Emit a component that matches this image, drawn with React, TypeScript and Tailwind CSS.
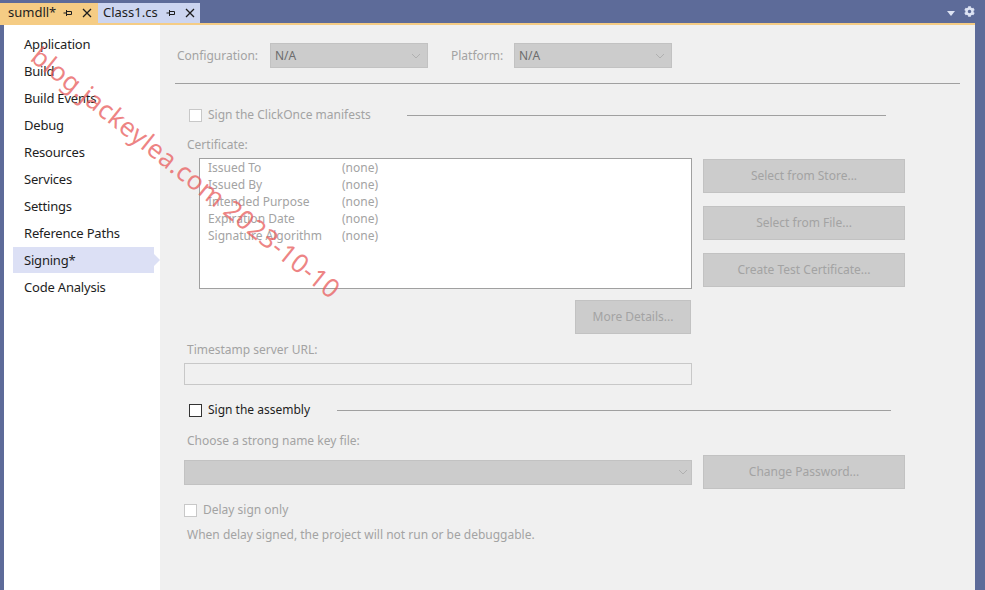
import React from "react";
import { FaCog } from "react-icons/fa";

const font = { fontFamily: '"Noto Sans", "Noto Sans CJK SC", sans-serif' };

const navItems = [
  "Application",
  "Build",
  "Build Events",
  "Debug",
  "Resources",
  "Services",
  "Settings",
  "Reference Paths",
  "Signing*",
  "Code Analysis",
];

const certRows = [
  "Issued To",
  "Issued By",
  "Intended Purpose",
  "Expiration Date",
  "Signature Algorithm",
];

function Pin() {
  return (
    <svg width="10" height="10" viewBox="0 0 10 10" className="shrink-0">
      <path d="M0.5 5H3.5M3.5 2V8M3.5 3.5H8.5V6.5H3.5" stroke="#1e1e1e" strokeWidth="1" fill="none" />
    </svg>
  );
}

function Close() {
  return (
    <svg width="10" height="10" viewBox="0 0 10 10" className="shrink-0">
      <path d="M1 1L9 9M9 1L1 9" stroke="#1e1e1e" strokeWidth="1.3" fill="none" />
    </svg>
  );
}

function Chevron() {
  return (
    <svg width="10" height="6" viewBox="0 0 10 6">
      <path d="M1 1L5 5L9 1" stroke="#b0b0b0" strokeWidth="1" fill="none" />
    </svg>
  );
}

function Check({ dark }: { dark?: boolean }) {
  return (
    <div
      className={
        dark
          ? "w-[13px] h-[13px] border border-[#333333] bg-white shrink-0"
          : "w-[13px] h-[13px] border border-[#c8c8c8] bg-white shrink-0"
      }
    />
  );
}

function Btn({ label, w }: { label: string; w: string }) {
  return (
    <div className={`${w} h-[34px] bg-[#cccccc] border border-[#c2c2c2] flex items-center justify-center text-[12px] text-[#a3a3a3]`}>
      {label}
    </div>
  );
}

export default function App() {
  return (
    <div className="w-[985px] h-[590px] bg-[#5d6b99] flex flex-col relative overflow-hidden" style={font}>
      {/* tab strip */}
      <div className="h-[23px] flex items-end shrink-0">
        <div className="w-[98px] h-[20px] bg-[#f5cc84] flex items-center pl-[8px] text-[13px] text-[#1e1e1e]">
          <span className="w-[55px]">sumdll*</span>
          <Pin />
          <span className="w-[9px]" />
          <Close />
        </div>
        <div className="w-[102px] h-[20px] bg-[#ccd5f0] flex items-center pl-[5px] text-[13px] text-[#1e1e1e]">
          <span className="w-[63px]">Class1.cs</span>
          <Pin />
          <span className="w-[9px]" />
          <Close />
        </div>
        <div className="flex-1" />
        <div className="h-[23px] flex items-center gap-[9px] pr-[10px]">
          <svg width="8" height="5" viewBox="0 0 8 5" className="mt-[3px]">
            <path d="M0 0H8L4 5Z" fill="#dde3f3" />
          </svg>
          <FaCog className="w-[11px] h-[11px] text-[#dde3f3]" />
        </div>
      </div>
      <div className="h-[2px] bg-[#f5cc84] mr-[10px] shrink-0" />

      <div className="flex-1 flex ml-[4px] mr-[10px]">
        {/* nav */}
        <div className="w-[156px] bg-white pt-[6px] flex flex-col">
          {navItems.map((n) => (
            <div key={n} className="h-[27px] flex items-center relative">
              {n === "Signing*" && (
                <div className="absolute left-[9px] top-0 w-[141px] h-[26px] bg-[#dce0f5]">
                  <div className="absolute left-[141px] top-[7px] w-0 h-0 border-y-[6px] border-y-transparent border-l-[6px] border-l-[#dce0f5]" />
                </div>
              )}
              <span className="relative pl-[20px] text-[13px] tracking-[-0.2px] text-[#1e1e1e]">{n}</span>
            </div>
          ))}
        </div>

        {/* content */}
        <div className="flex-1 bg-[#f0f0f0] flex flex-col text-[12px] text-[#a3a3a3]">
          <div className="flex items-center mt-[18px] pl-[17px]">
            <span className="w-[93px]">Configuration:</span>
            <div className="w-[158px] h-[25px] bg-[#cccccc] border border-[#c2c2c2] flex items-center justify-between pl-[4px] pr-[6px] text-[#6d6d6d]">
              <span>N/A</span>
              <Chevron />
            </div>
            <span className="ml-[23px] w-[63px]">Platform:</span>
            <div className="w-[158px] h-[25px] bg-[#cccccc] border border-[#c2c2c2] flex items-center justify-between pl-[4px] pr-[6px] text-[#6d6d6d]">
              <span>N/A</span>
              <Chevron />
            </div>
          </div>

          <div className="mt-[15px] ml-[15px] w-[785px] h-px bg-[#a0a0a0]" />

          <div className="mt-[21px] h-[20px] flex items-center pl-[29px]">
            <Check />
            <span className="ml-[6px] w-[199px]">Sign the ClickOnce manifests</span>
            <div className="w-[479px] h-px bg-[#a0a0a0]" />
          </div>

          <div className="mt-[12px] h-[16px] leading-[16px] pl-[27px]">Certificate:</div>

          <div className="mt-[5px] flex pl-[39px]">
            <div className="w-[493px] h-[131px] bg-white border border-[#a0a0a0] pl-[8px]">
              {certRows.map((r) => (
                <div key={r} className="h-[17px] flex items-center">
                  <span className="w-[134px]">{r}</span>
                  <span>(none)</span>
                </div>
              ))}
            </div>
            <div className="ml-[11px] flex flex-col gap-[13px] pt-[1px]">
              <Btn label="Select from Store..." w="w-[202px]" />
              <Btn label="Select from File..." w="w-[202px]" />
              <Btn label="Create Test Certificate..." w="w-[202px]" />
            </div>
          </div>

          <div className="mt-[11px] pl-[415px]">
            <Btn label="More Details..." w="w-[116px]" />
          </div>

          <div className="mt-[8px] h-[16px] leading-[16px] pl-[27px]">Timestamp server URL:</div>
          <div className="mt-[5px] ml-[24px] w-[508px] h-[22px] border border-[#c8c8c8] bg-[#f0f0f0]" />

          <div className="mt-[15px] h-[20px] flex items-center pl-[29px] text-[#1e1e1e]">
            <Check dark />
            <span className="ml-[6px] w-[129px]">Sign the assembly</span>
            <div className="w-[554px] h-px bg-[#a0a0a0]" />
          </div>

          <div className="mt-[13px] h-[16px] leading-[16px] pl-[27px]">Choose a strong name key file:</div>

          <div className="mt-[6px] flex items-center pl-[24px]">
            <div className="w-[508px] h-[25px] bg-[#cccccc] border border-[#c2c2c2] flex items-center justify-end pr-[3px]">
              <Chevron />
            </div>
            <div className="ml-[11px]">
              <Btn label="Change Password..." w="w-[202px]" />
            </div>
          </div>

          <div className="mt-[11px] h-[20px] flex items-center pl-[24px]">
            <Check />
            <span className="ml-[6px]">Delay sign only</span>
          </div>

          <div className="mt-[7px] h-[16px] leading-[16px] pl-[27px]">
            When delay signed, the project will not run or be debuggable.
          </div>
        </div>
      </div>

      {/* watermark */}
      <div
        className="absolute left-[47px] top-[37px] origin-top-left rotate-[38.5deg] text-[26px] tracking-[0.4px] text-[#e85c5c]/75 whitespace-nowrap pointer-events-none"
        style={font}
      >
        blog.jackeylea.com 2023-10-10
      </div>
    </div>
  );
}
